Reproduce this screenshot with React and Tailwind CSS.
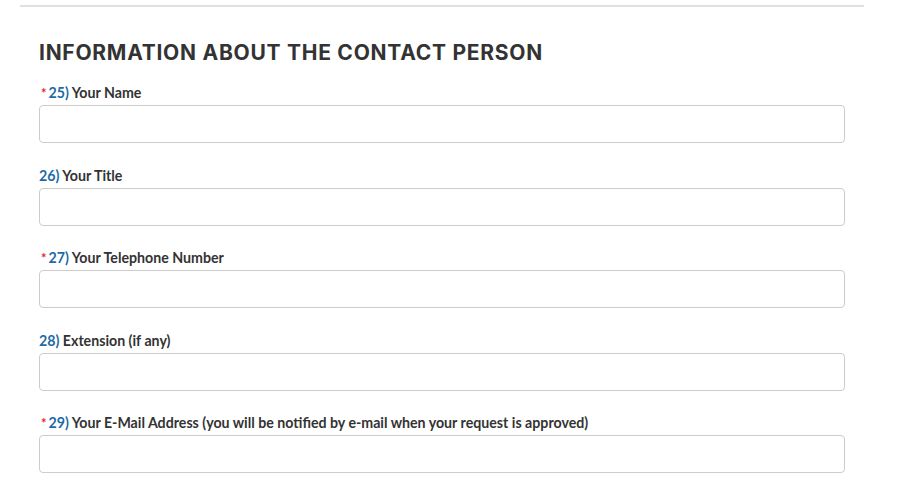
const fields = [
  { num: '25)', label: 'Your Name', required: true },
  { num: '26)', label: 'Your Title', required: false },
  { num: '27)', label: 'Your Telephone Number', required: true },
  { num: '28)', label: 'Extension (if any)', required: false },
  {
    num: '29)',
    label: 'Your E-Mail Address (you will be notified by e-mail when your request is approved)',
    required: true,
  },
];

function Field({ num, label, required }) {
  return (
    <div className="mb-[22.5px]">
      <label className="block h-5 text-[14.2px] leading-5 font-bold text-[#333333] font-['Lato',sans-serif]">
        {required && <span className="text-[#e4252b] ml-[2px] mr-[2px] text-[13px]">*</span>}
        <span className="text-[#1d6aa5]">{num}</span> {label}
      </label>
      <input
        type="text"
        className="mt-[2px] block w-full h-[38px] rounded border border-[#cccccc] bg-white px-2"
      />
    </div>
  );
}

export default function App() {
  return (
    <div className="w-[904px] h-[496px] bg-white overflow-hidden">
      <div className="pt-[5px] pl-5 w-[864px]">
        <div className="h-[2px] bg-[#e0e0e0]" />
      </div>
      <div className="pl-[39px] w-[845px]">
        <h2 className="mt-[31px] mb-[15px] text-[21px] leading-[30px] font-bold tracking-[0.035em] text-[#333333] font-['Inter',sans-serif]">
          INFORMATION ABOUT THE CONTACT PERSON
        </h2>
        {fields.map((f) => (
          <Field key={f.num} {...f} />
        ))}
      </div>
    </div>
  );
}
